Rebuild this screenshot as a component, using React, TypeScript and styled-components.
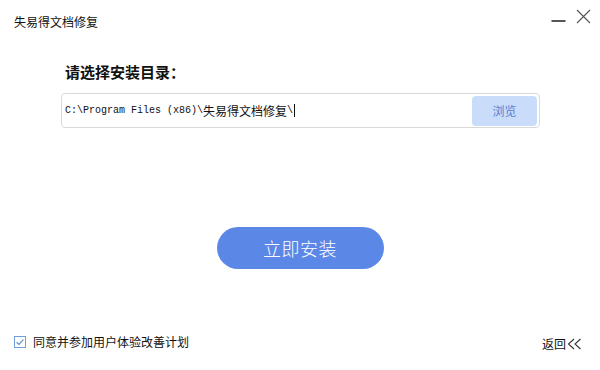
import styled, { createGlobalStyle } from "styled-components";

const Global = createGlobalStyle`
  html, body {
    margin: 0;
    padding: 0;
    background: #fff;
  }
  * { box-sizing: border-box; }
`;

const Window = styled.div`
  width: 600px;
  height: 370px;
  display: flex;
  flex-direction: column;
  background: #fff;
  font-family: "Noto Sans CJK SC", "DejaVu Sans", sans-serif;
  color: #111;
  overflow: hidden;
`;

const Header = styled.div`
  height: 44px;
  display: flex;
  align-items: flex-start;
  justify-content: space-between;
  padding: 14px 9px 0 14px;
`;

const Title = styled.div`
  font-size: 12px;
  line-height: 16px;
  color: #111;
`;

const WinControls = styled.div`
  display: flex;
  align-items: flex-start;
  gap: 10px;
  margin-top: -5px;
`;

const CtrlBtn = styled.button`
  width: 15px;
  height: 16px;
  padding: 0;
  border: none;
  background: transparent;
  display: flex;
  align-items: center;
  justify-content: center;
`;

const Body = styled.div`
  display: flex;
  flex-direction: column;
  padding: 0 60px 0 61px;
`;

const Heading = styled.h2`
  margin: 18px 0 11px 4px;
  font-size: 15px;
  line-height: 20px;
  font-weight: 700;
  color: #111;
`;

const PathBox = styled.div`
  height: 35px;
  border: 1px solid #d9d9d9;
  border-radius: 4px;
  display: flex;
  align-items: center;
  justify-content: space-between;
  padding: 0 2px 0 3px;
`;

const PathText = styled.div`
  font-size: 12px;
  color: #111;
  white-space: nowrap;
  display: flex;
  align-items: center;
`;

const Mono = styled.span`
  font-family: "Liberation Mono", monospace;
  font-size: 10px;
`;

const Caret = styled.span`
  display: inline-block;
  width: 1px;
  height: 13px;
  background: #111;
  margin-left: 1px;
`;

const BrowseBtn = styled.button`
  width: 65px;
  height: 30px;
  border: none;
  border-radius: 4px;
  background: #c9dcfa;
  color: #5a7fd2;
  font-family: inherit;
  font-size: 12px;
`;

const InstallWrap = styled.div`
  display: flex;
  justify-content: center;
  margin-top: 99px;
  padding-right: 1px;
`;

const InstallBtn = styled.button`
  width: 167px;
  height: 42px;
  border: none;
  border-radius: 21px;
  background: #5b87e6;
  color: #fff;
  font-family: inherit;
  font-size: 18px;
  font-weight: 300;
  letter-spacing: 0.5px;
`;

const Footer = styled.div`
  margin-top: auto;
  display: flex;
  align-items: center;
  justify-content: space-between;
  padding: 0 18px 18px 14px;
`;

const Agree = styled.label`
  display: flex;
  align-items: center;
  gap: 7px;
  font-size: 12px;
  color: #111;
`;

const Back = styled.div`
  display: flex;
  align-items: center;
  gap: 1px;
  font-size: 12px;
  color: #111;
  margin-top: 4px;
`;

function CheckBox() {
  return (
    <svg width="12" height="12" viewBox="0 0 12 12">
      <rect x="0.5" y="0.5" width="11" height="11" fill="#fff" stroke="#6f9fd8" />
      <path d="M2.6 6.2 L5 8.4 L9.4 3.6" fill="none" stroke="#5b8fd0" strokeWidth="1.2" />
    </svg>
  );
}

function DoubleChevron() {
  return (
    <svg width="15" height="12" viewBox="0 0 15 12">
      <path d="M7 1 L1.5 6 L7 11" fill="none" stroke="#333" strokeWidth="1.1" />
      <path d="M13.5 1 L8 6 L13.5 11" fill="none" stroke="#333" strokeWidth="1.1" />
    </svg>
  );
}

export default function App() {
  return (
    <>
      <Global />
      <Window>
        <Header>
          <Title>失易得文档修复</Title>
          <WinControls>
            <CtrlBtn>
              <svg width="15" height="16" viewBox="0 0 15 16">
                <line x1="0.5" y1="12" x2="14.5" y2="12" stroke="#555" strokeWidth="2" />
              </svg>
            </CtrlBtn>
            <CtrlBtn>
              <svg width="15" height="16" viewBox="0 0 15 16">
                <path d="M1 1 L14 14 M14 1 L1 14" stroke="#555" strokeWidth="1.1" />
              </svg>
            </CtrlBtn>
          </WinControls>
        </Header>
        <Body>
          <Heading>请选择安装目录：</Heading>
          <PathBox>
            <PathText>
              <Mono>C:\Program Files (x86)\</Mono>
              失易得文档修复
              <Mono>\</Mono>
              <Caret />
            </PathText>
            <BrowseBtn>浏览</BrowseBtn>
          </PathBox>
          <InstallWrap>
            <InstallBtn>立即安装</InstallBtn>
          </InstallWrap>
        </Body>
        <Footer>
          <Agree>
            <CheckBox />
            同意并参加用户体验改善计划
          </Agree>
          <Back>
            返回
            <DoubleChevron />
          </Back>
        </Footer>
      </Window>
    </>
  );
}
